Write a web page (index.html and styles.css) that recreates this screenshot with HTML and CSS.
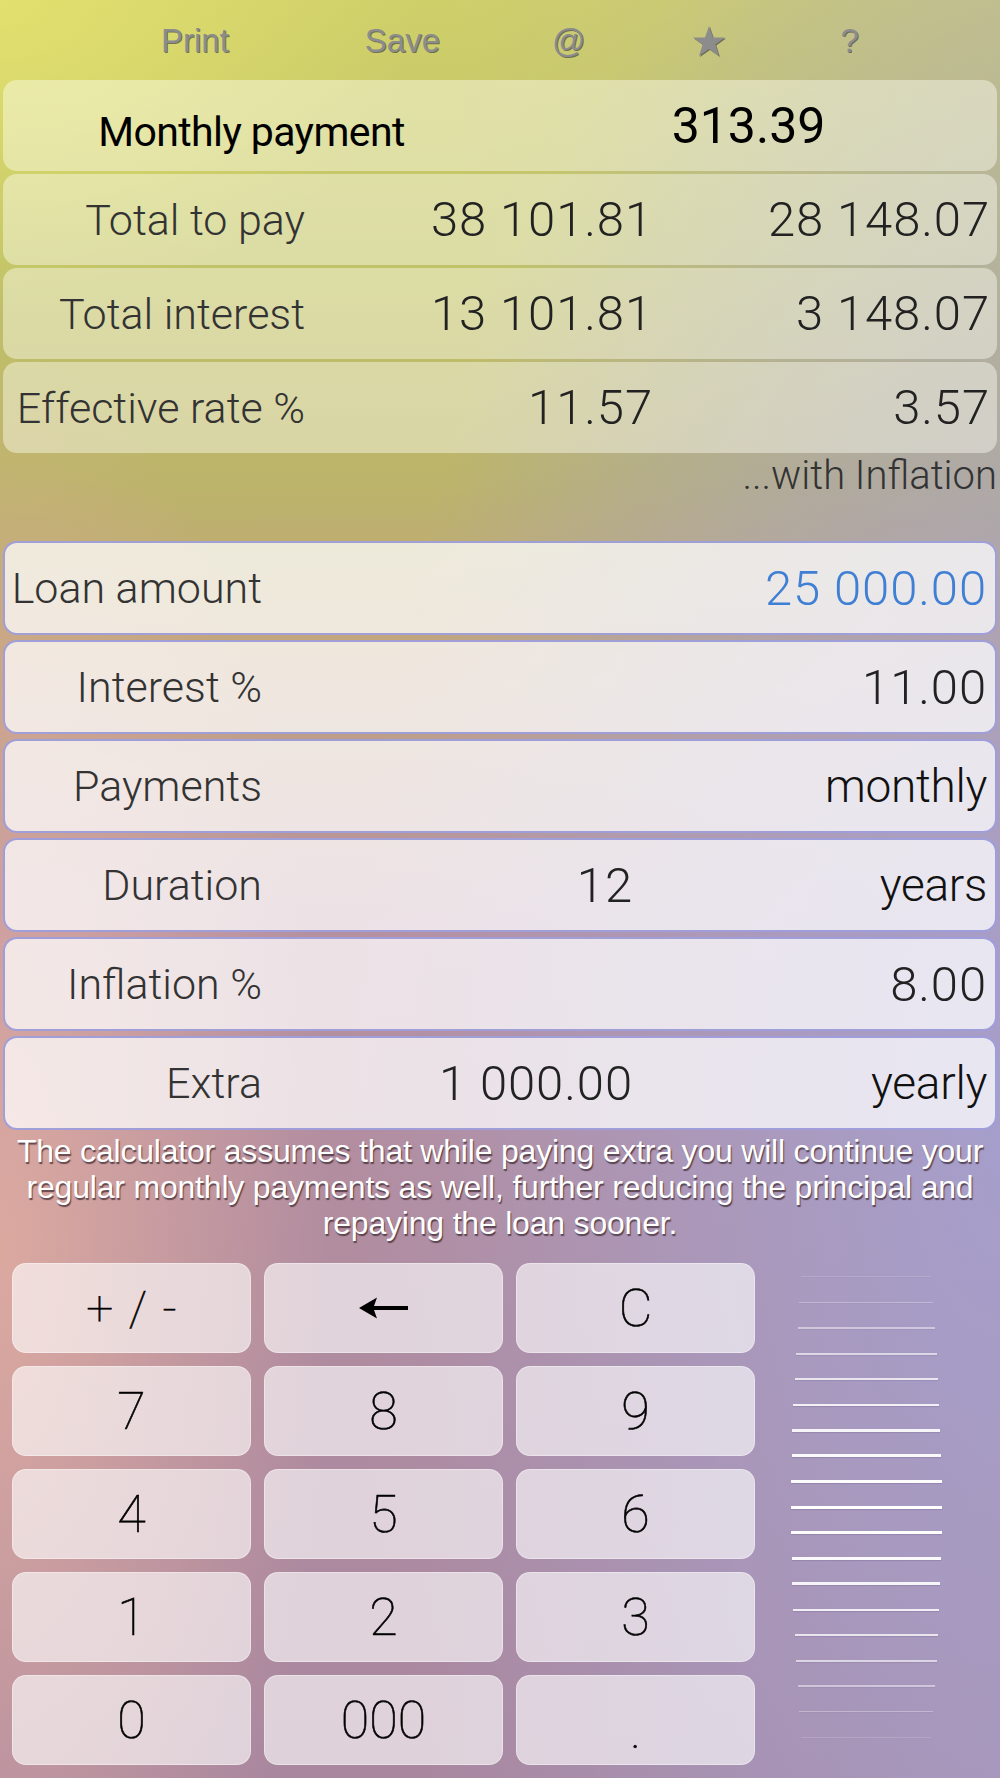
FILE: index.html
```html
<!DOCTYPE html>
<html lang="en">
<head>
    <meta charset="UTF-8">
    <title>Loan Calculator</title>
    <link rel="stylesheet" href="styles.css">
</head>
<body>
    <div class="app">
        <nav class="toolbar">
            <span class="tool tool-print">Print</span>
            <span class="tool">Save</span>
            <span class="tool">@</span>
            <span class="tool tool-star">
                <svg width="34" height="32" viewBox="0 0 34 32"><polygon points="17,1 21,12.5 33,12.5 23.3,19.6 27,31 17,24 7,31 10.7,19.6 1,12.5 13,12.5"/></svg>
            </span>
            <span class="tool">?</span>
        </nav>

        <section class="results">
            <div class="res-card res-main">
                <span>Monthly payment</span>
                <span>313.39</span>
            </div>
            <div class="res-card">
                <span class="lbl">Total to pay</span>
                <span class="val">38 101.81</span>
                <span class="val">28 148.07</span>
            </div>
            <div class="res-card">
                <span class="lbl">Total interest</span>
                <span class="val">13 101.81</span>
                <span class="val">3 148.07</span>
            </div>
            <div class="res-card">
                <span class="lbl">Effective rate %</span>
                <span class="val">11.57</span>
                <span class="val">3.57</span>
            </div>
        </section>
        <div class="inflation">...with Inflation</div>

        <section class="inputs">
            <div class="in-card">
                <span class="lbl">Loan amount</span>
                <span></span>
                <span class="val active">25 000.00</span>
            </div>
            <div class="in-card">
                <span class="lbl">Interest %</span>
                <span></span>
                <span class="val">11.00</span>
            </div>
            <div class="in-card">
                <span class="lbl">Payments</span>
                <span></span>
                <span class="val word">monthly</span>
            </div>
            <div class="in-card">
                <span class="lbl">Duration</span>
                <span class="val">12</span>
                <span class="val word">years</span>
            </div>
            <div class="in-card">
                <span class="lbl">Inflation %</span>
                <span></span>
                <span class="val">8.00</span>
            </div>
            <div class="in-card">
                <span class="lbl">Extra</span>
                <span class="val">1 000.00</span>
                <span class="val word">yearly</span>
            </div>
        </section>

        <p class="hint">The calculator assumes that while paying extra you will continue your regular monthly payments as well, further reducing the principal and repaying the loan sooner.</p>

        <div class="pad">
            <div class="keys">
                <button class="key key-sign">+ / -</button>
                <button class="key key-back">
                    <svg width="50" height="22" viewBox="0 0 50 22"><path d="M0 11 L18 0.5 L15 9 H49 V13 H15 L18 21.5 Z"/></svg>
                </button>
                <button class="key">C</button>
                <button class="key">7</button>
                <button class="key">8</button>
                <button class="key">9</button>
                <button class="key">4</button>
                <button class="key">5</button>
                <button class="key">6</button>
                <button class="key">1</button>
                <button class="key">2</button>
                <button class="key">3</button>
                <button class="key">0</button>
                <button class="key">000</button>
                <button class="key key-dot">.</button>
            </div>
            <div class="wheel">
                <i class="d9"></i><i class="d8"></i><i class="d7"></i><i class="d6"></i><i class="d5"></i>
                <i class="d4"></i><i class="d3"></i><i class="d2"></i><i class="d1"></i><i class="d0"></i>
                <i class="d1"></i><i class="d2"></i><i class="d3"></i><i class="d4"></i><i class="d5"></i>
                <i class="d6"></i><i class="d7"></i><i class="d8"></i><i class="d9"></i>
            </div>
        </div>
    </div>
</body>
</html>
```

FILE: styles.css
```css
body {
    margin: 0;
    width: 1000px;
    height: 1778px;
    overflow: hidden;
    font-family: Roboto, "Liberation Sans", sans-serif;
    color: #2a2a2a;
    background:
        radial-gradient(ellipse 650px 1350px at 1000px 1150px, rgba(164,160,208,0.85), rgba(164,160,208,0)),
        linear-gradient(to right, rgba(170,165,200,0) 45%, rgba(170,165,200,0.3) 100%),
        radial-gradient(ellipse 330px 900px at 0 1250px, rgba(224,172,160,0.9), rgba(224,172,160,0)),
        radial-gradient(ellipse 420px 300px at 0 0, rgba(228,226,110,0.9), rgba(228,226,110,0)),
        linear-gradient(to bottom, #cfcf6a 0%, #c2c468 14%, #bcb46a 27%, #c2a47e 37%, #b690a0 52%, #a9879f 100%);
}
.app {
    padding: 0 3px;
}

/* toolbar */
.toolbar {
    height: 80px;
    display: flex;
    align-items: center;
    padding-left: 158px;
    gap: 112px;
    box-sizing: border-box;
    padding-top: 2px;
}
.tool {
    font-family: "Liberation Sans", sans-serif;
    font-size: 33px;
    color: #8c8c8c;
    text-shadow: 1px 1px 0 rgba(70,70,70,0.7);
}
.tool-print { margin-right: 24px; }
.tool-star { margin-left: -6px; margin-right: 3px; }
.tool-star svg {
    display: block;
    fill: #8c8c8c;
    filter: drop-shadow(1px 1px 0 rgba(70,70,70,0.7));
}

/* results */
.results {
    display: flex;
    flex-direction: column;
    gap: 3px;
}
.res-card {
    height: 91px;
    display: grid;
    grid-template-columns: 302px 348px 1fr;
    align-items: center;
    padding-right: 7px;
    border-radius: 14px;
    background: rgba(255,255,245,0.43);
    font-weight: 300;
}
.res-card .lbl {
    text-align: right;
    font-size: 43px;
    color: #333;
}
.res-card .val {
    text-align: right;
    font-size: 49px;
    letter-spacing: 0.9px;
    color: #222;
}
.res-main {
    grid-template-columns: 1fr 1fr;
    padding-right: 0;
    color: #000;
    text-align: center;
    font-weight: 400;
}
.res-main span:first-child {
    font-size: 41px;
    letter-spacing: -0.6px;
    padding-top: 12px;
}
.res-main span:last-child {
    font-size: 50px;
}
.inflation {
    text-align: right;
    font-size: 40px;
    font-weight: 300;
    color: #333;
    margin-top: -1px;
    height: 89px;
}

/* inputs */
.inputs {
    display: flex;
    flex-direction: column;
    gap: 5px;
}
.in-card {
    height: 94px;
    box-sizing: border-box;
    display: grid;
    grid-template-columns: 257px 371px 1fr;
    align-items: center;
    padding-right: 8px;
    border: 2px solid rgba(146,146,214,0.85);
    border-radius: 14px;
    background: rgba(255,255,255,0.74);
    font-weight: 300;
}
.in-card .lbl {
    text-align: right;
    font-size: 43px;
    color: #333;
}
.in-card .val {
    text-align: right;
    font-size: 49px;
    letter-spacing: 0.9px;
    color: #222;
}
.in-card .word {
    font-size: 46px;
    letter-spacing: -0.3px;
    color: #111;
}
.in-card .active { color: #3f7fd4; }

.hint {
    margin: 3px 0 0;
    text-align: center;
    font-family: "Liberation Sans", sans-serif;
    font-size: 32px;
    letter-spacing: -0.2px;
    line-height: 36px;
    color: #fff;
    text-shadow: 1px 2px 1px rgba(60,40,50,0.75);
}

/* keypad */
.pad {
    display: flex;
    margin-top: 22px;
}
.keys {
    display: grid;
    grid-template-columns: repeat(3, 239px);
    grid-auto-rows: 90px;
    gap: 13px 13px;
    padding-left: 9px;
}
.key {
    border: 1px solid rgba(255,255,255,0.35);
    border-radius: 14px;
    background: rgba(255,255,255,0.62);
    font-family: Roboto, "Liberation Sans", sans-serif;
    font-weight: 100;
    font-size: 52px;
    color: #000;
    -webkit-text-stroke: 0.6px #000;
    padding: 0;
}
.key-sign { font-size: 48px; word-spacing: 4px; }
.key-back svg { display: block; margin: 0 auto; fill: #000; }
.key-dot { padding-top: 20px; }

.wheel {
    margin-left: 33px;
    margin-top: 1px;
    display: grid;
    grid-auto-rows: 25.6px;
    align-items: center;
    justify-items: center;
    width: 156px;
}
.wheel i {
    display: block;
    background: #fff;
    box-shadow: 0 1px 1px rgba(90,70,120,0.25);
}
.d0 { width: 151px; height: 3px; opacity: 1; }
.d1 { width: 151px; height: 3px; opacity: 0.98; }
.d2 { width: 149px; height: 3px; opacity: 0.95; }
.d3 { width: 148px; height: 3px; opacity: 0.9; }
.d4 { width: 146px; height: 2px; opacity: 0.85; }
.d5 { width: 143px; height: 2px; opacity: 0.75; }
.d6 { width: 141px; height: 2px; opacity: 0.6; }
.d7 { width: 137px; height: 2px; opacity: 0.45; }
.d8 { width: 134px; height: 1px; opacity: 0.3; }
.d9 { width: 130px; height: 1px; opacity: 0.15; }
```
